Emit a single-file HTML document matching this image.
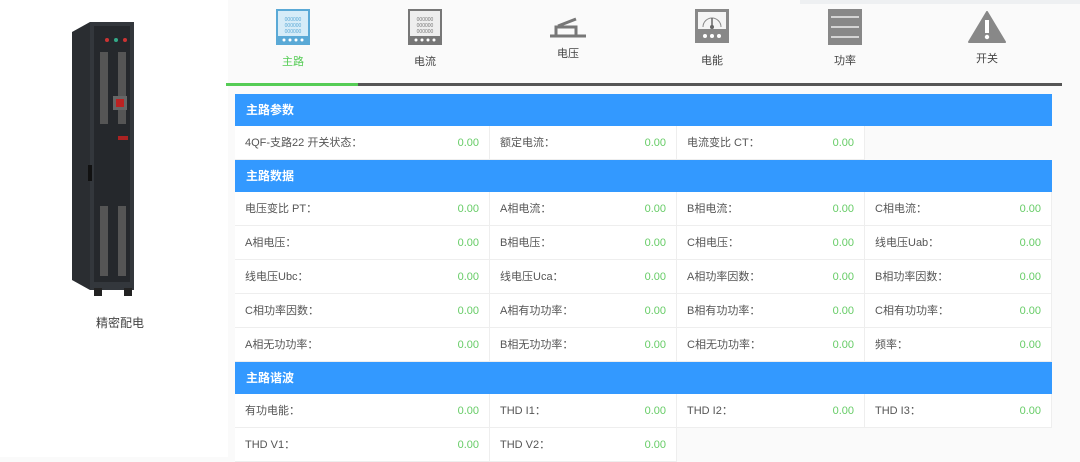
<!DOCTYPE html>
<html><head><meta charset="utf-8"><style>
body{margin:0;width:1080px;height:457px;overflow:hidden;background:#fafafa;font-family:"Liberation Sans","Noto Sans CJK SC",sans-serif;position:relative}
.a{position:absolute}
.tab{position:absolute;top:0;width:100px;text-align:center;font-size:11px;color:#444}
.tab svg{display:block;margin:0 auto}
.hd{position:absolute;left:235px;width:817px;height:32px;background:#3399ff;color:#fff;font-size:12px;font-weight:bold;line-height:32px;padding-left:11px;box-sizing:border-box}
.row{position:absolute;left:235px;height:34px;display:flex}
.c{box-sizing:border-box;height:34px;line-height:34px;font-size:11px;color:#555;padding:0 10px;display:flex;justify-content:space-between;background:#fff;border-right:1px solid #eee;border-bottom:1px solid #eee}
.c b{font-weight:normal;color:#6c6}
.w1{width:255px}.w2{width:187px}.w3{width:188px}.w4{width:187px}
</style></head><body>
<div class="a" style="left:0;top:0;width:228px;height:457px;background:#fff"></div>
<!-- cabinet -->
<svg class="a" style="left:68px;top:20px" width="70" height="278" viewBox="0 0 70 278">
<polygon points="4,12 22,2 22,270 4,260" fill="#2a2d31"/>
<rect x="22" y="2" width="44" height="268" fill="#33373c"/>
<rect x="26" y="6" width="36" height="256" fill="#25282c"/>
<rect x="20" y="145" width="4" height="16" fill="#111"/>
<circle cx="39" cy="20" r="2" fill="#c33"/><circle cx="48" cy="20" r="2" fill="#3a8"/><circle cx="57" cy="20" r="2" fill="#c33"/>
<rect x="32" y="32" width="8" height="72" fill="#555"/><rect x="50" y="32" width="8" height="72" fill="#555"/>
<rect x="45" y="76" width="14" height="14" fill="#666"/><rect x="48" y="79" width="8" height="8" fill="#b22"/>
<rect x="50" y="116" width="10" height="4" fill="#a22"/>
<rect x="32" y="186" width="8" height="70" fill="#555"/><rect x="50" y="186" width="8" height="70" fill="#555"/>
<rect x="26" y="268" width="8" height="8" fill="#222"/><rect x="56" y="268" width="8" height="8" fill="#222"/>
</svg>
<div class="a" style="left:80px;top:314px;width:80px;text-align:center;font-size:12px;color:#444">精密配电</div>
<!-- tabs -->
<div class="a" style="left:800px;top:0;width:280px;height:4px;background:#eef0f2"></div>
<div class="tab" style="left:243px"><svg width="34" height="36" style="margin-top:9px" viewBox="0 0 34 36"><rect x="1" y="1" width="32" height="34" fill="#d6ecf8" stroke="#5aa9d6" stroke-width="2"/><rect x="2" y="27" width="30" height="8" fill="#5aa9d6"/><text x="17" y="12" font-size="5" fill="#5aa9d6" text-anchor="middle">000000</text><text x="17" y="18" font-size="5" fill="#5aa9d6" text-anchor="middle">000000</text><text x="17" y="24" font-size="5" fill="#5aa9d6" text-anchor="middle">000000</text><circle cx="8" cy="31" r="1.5" fill="#fff"/><circle cx="14" cy="31" r="1.5" fill="#fff"/><circle cx="20" cy="31" r="1.5" fill="#fff"/><circle cx="26" cy="31" r="1.5" fill="#fff"/></svg><div style="margin-top:8px;color:#5c5">主路</div></div>
<div class="tab" style="left:375px"><svg width="34" height="36" style="margin-top:9px" viewBox="0 0 34 36"><rect x="1" y="1" width="32" height="34" fill="#eee" stroke="#777" stroke-width="2"/><rect x="2" y="27" width="30" height="8" fill="#777"/><text x="17" y="12" font-size="5" fill="#777" text-anchor="middle">000000</text><text x="17" y="18" font-size="5" fill="#777" text-anchor="middle">000000</text><text x="17" y="24" font-size="5" fill="#777" text-anchor="middle">000000</text><circle cx="8" cy="31" r="1.5" fill="#fff"/><circle cx="14" cy="31" r="1.5" fill="#fff"/><circle cx="20" cy="31" r="1.5" fill="#fff"/><circle cx="26" cy="31" r="1.5" fill="#fff"/></svg><div style="margin-top:8px">电流</div></div>
<div class="tab" style="left:518px"><svg width="40" height="24" style="margin-top:15px" viewBox="0 0 40 24"><path d="M2 21h36M8 21V12h20v9M10 11l18-7" stroke="#777" stroke-width="3" fill="none"/></svg><div style="margin-top:6px">电压</div></div>
<div class="tab" style="left:662px"><svg width="34" height="34" style="margin-top:9px" viewBox="0 0 34 34"><rect x="0" y="0" width="34" height="34" fill="#888"/><rect x="3" y="3" width="28" height="17" fill="#f4f4f4"/><path d="M8 18a9 9 0 0 1 18 0" stroke="#888" fill="none"/><path d="M17 18V9" stroke="#666" stroke-width="1.5"/><circle cx="17" cy="18" r="2" fill="#666"/><circle cx="10" cy="27" r="2" fill="#fff"/><circle cx="17" cy="27" r="2" fill="#fff"/><circle cx="24" cy="27" r="2" fill="#fff"/></svg><div style="margin-top:9px">电能</div></div>
<div class="tab" style="left:795px"><svg width="34" height="36" style="margin-top:9px" viewBox="0 0 34 36"><rect width="34" height="36" fill="#888"/><path d="M3 8h28M3 18h28M3 28h28" stroke="#eee" stroke-width="1.5"/></svg><div style="margin-top:7px">功率</div></div>
<div class="tab" style="left:937px"><svg width="38" height="32" style="margin-top:11px" viewBox="0 0 38 32"><path d="M19 1L37 31H1Z" fill="#888" stroke="#888" stroke-linejoin="round" stroke-width="2"/><rect x="17" y="9" width="4" height="13" fill="#fff"/><circle cx="19" cy="26" r="2.2" fill="#fff"/></svg><div style="margin-top:7px">开关</div></div>
<div class="a" style="left:226px;top:83px;width:836px;height:3px;background:#555"></div>
<div class="a" style="left:226px;top:83px;width:132px;height:3px;background:#5c5"></div>
<!-- section 1 -->
<div class="hd" style="top:94px">主路参数</div>
<div class="row" style="top:126px"><div class="c w1">4QF-支路22 开关状态：<b>0.00</b></div><div class="c w2">额定电流：<b>0.00</b></div><div class="c w3">电流变比 CT：<b>0.00</b></div></div>
<div class="hd" style="top:160px">主路数据</div>
<div class="row" style="top:192px"><div class="c w1">电压变比 PT：<b>0.00</b></div><div class="c w2">A相电流：<b>0.00</b></div><div class="c w3">B相电流：<b>0.00</b></div><div class="c w4">C相电流：<b>0.00</b></div></div>
<div class="row" style="top:226px"><div class="c w1">A相电压：<b>0.00</b></div><div class="c w2">B相电压：<b>0.00</b></div><div class="c w3">C相电压：<b>0.00</b></div><div class="c w4">线电压Uab：<b>0.00</b></div></div>
<div class="row" style="top:260px"><div class="c w1">线电压Ubc：<b>0.00</b></div><div class="c w2">线电压Uca：<b>0.00</b></div><div class="c w3">A相功率因数：<b>0.00</b></div><div class="c w4">B相功率因数：<b>0.00</b></div></div>
<div class="row" style="top:294px"><div class="c w1">C相功率因数：<b>0.00</b></div><div class="c w2">A相有功功率：<b>0.00</b></div><div class="c w3">B相有功功率：<b>0.00</b></div><div class="c w4">C相有功功率：<b>0.00</b></div></div>
<div class="row" style="top:328px"><div class="c w1">A相无功功率：<b>0.00</b></div><div class="c w2">B相无功功率：<b>0.00</b></div><div class="c w3">C相无功功率：<b>0.00</b></div><div class="c w4">频率：<b>0.00</b></div></div>
<div class="hd" style="top:362px">主路谐波</div>
<div class="row" style="top:394px"><div class="c w1">有功电能：<b>0.00</b></div><div class="c w2">THD I1：<b>0.00</b></div><div class="c w3">THD I2：<b>0.00</b></div><div class="c w4">THD I3：<b>0.00</b></div></div>
<div class="row" style="top:428px"><div class="c w1">THD V1：<b>0.00</b></div><div class="c w2">THD V2：<b>0.00</b></div></div>
</body></html>
